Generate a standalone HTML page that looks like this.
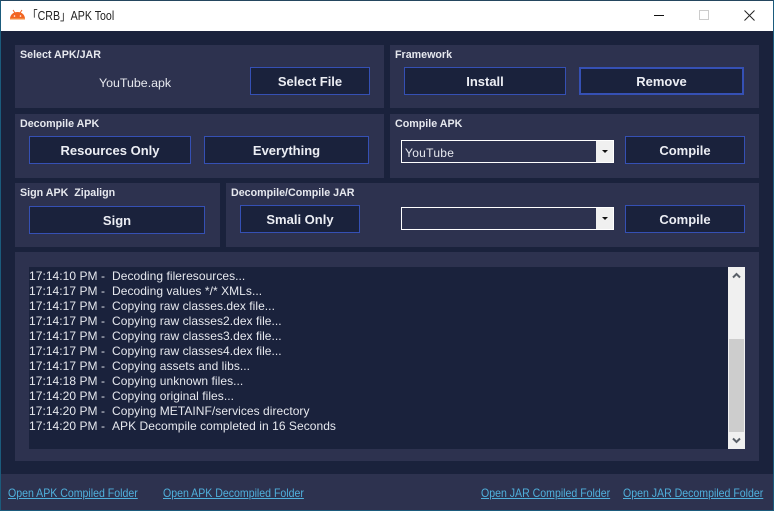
<!DOCTYPE html>
<html><head><meta charset="utf-8"><style>
html,body{margin:0;padding:0;width:774px;height:511px;overflow:hidden;background:#1a223c}
body{position:relative;font-family:"Liberation Sans","Noto Sans CJK JP",sans-serif}
div,a,span{position:absolute;box-sizing:border-box;white-space:nowrap}
.p{background:#2d324f}
.h{font-weight:bold;font-size:10.7px;color:#e6e8ee;line-height:12px}
.b{background:#1a223c;border:1px solid #3550b4;color:#eceef4;font-weight:bold;font-size:13px;display:flex;align-items:center;justify-content:center;padding-top:1px}
.c{border:1px solid #fff;background:#2d324f;color:#e6e8ee;font-size:12px;line-height:23px;padding-left:3px;padding-top:1px;letter-spacing:.3px}
.ar{right:0;top:0;bottom:0;width:17px;background:#f0f0f0}
.ar:after{content:"";position:absolute;left:6px;top:9px;border:3px solid transparent;border-top:3px solid #111;border-bottom:0}
.l{left:29px;font-size:12px;line-height:15px;color:#e6e8ee;letter-spacing:.05px}
.l span{position:absolute;left:83px}
a{font-size:12px;color:#4fb0dc;text-decoration:underline;line-height:15px;top:486px;transform:scaleX(.88);transform-origin:left top}
</style></head><body>
<div style="left:0;top:0;width:774px;height:511px;border:1px solid #1b5b7c;border-top-color:#24465f"></div>
<div style="left:1px;top:1px;width:772px;height:30px;background:#fff"></div>
<svg style="position:absolute;left:10px;top:9px" width="15" height="12" viewBox="0 0 15 12"><path d="M0 10C0 6 3 3 7.500 3S15 6 15 10Z" fill="#f26522"/><path d="M3 1l2 3M12 1l-2 3" stroke="#f26522" stroke-width="1"/><rect x="0" y="9" width="15" height="1.500" fill="#f58a3c"/><circle cx="4.500" cy="7" r=".8" fill="#fff"/><circle cx="10.500" cy="7" r=".8" fill="#fff"/></svg>
<div style="left:27px;top:8px;font-size:12.5px;line-height:16px;color:#222;transform:scaleX(.85);transform-origin:left top">「CRB」APK Tool</div>
<div style="left:654px;top:15px;width:10px;height:1px;background:#111"></div>
<div style="left:699px;top:10px;width:10px;height:10px;border:1px solid #ccc"></div>
<svg style="position:absolute;left:744px;top:10px" width="11" height="11" viewBox="0 0 11 11"><path d="M.5.500l10 10M10.500.500l-10 10" stroke="#222" stroke-width="1" fill="none"/></svg>

<div class="p" style="left:15px;top:45px;width:369px;height:63px"></div>
<div class="p" style="left:390px;top:45px;width:369px;height:63px"></div>
<div class="p" style="left:15px;top:114px;width:369px;height:64px"></div>
<div class="p" style="left:390px;top:114px;width:369px;height:64px"></div>
<div class="p" style="left:15px;top:183px;width:205px;height:64px"></div>
<div class="p" style="left:226px;top:183px;width:533px;height:64px"></div>
<div class="p" style="left:15px;top:252px;width:744px;height:209px"></div>
<div class="p" style="left:0;top:474px;width:774px;height:36px"></div>
<div style="left:0;top:474px;width:1px;height:37px;background:#1b5b7c"></div>
<div style="left:773px;top:474px;width:1px;height:37px;background:#1b5b7c"></div>
<div style="left:0;top:510px;width:774px;height:1px;background:#1b5b7c"></div>

<div class="h" style="left:20px;top:49px">Select APK/JAR</div>
<div class="h" style="left:395px;top:49px">Framework</div>
<div class="h" style="left:20px;top:118px">Decompile APK</div>
<div class="h" style="left:395px;top:118px">Compile APK</div>
<div class="h" style="left:20px;top:187px">Sign APK&nbsp; Zipalign</div>
<div class="h" style="left:231px;top:187px">Decompile/Compile JAR</div>

<div style="left:99px;top:75px;font-size:12.4px;line-height:16px;color:#e6e8ee">YouTube.apk</div>
<div class="b" style="left:250px;top:67px;width:120px;height:28px">Select File</div>
<div class="b" style="left:404px;top:67px;width:162px;height:28px">Install</div>
<div class="b" style="left:579px;top:67px;width:165px;height:28px;border-width:2px">Remove</div>
<div class="b" style="left:29px;top:136px;width:162px;height:28px">Resources Only</div>
<div class="b" style="left:204px;top:136px;width:165px;height:28px">Everything</div>
<div class="c" style="left:401px;top:140px;width:213px;height:23px">YouTube<div class="ar"></div></div>
<div class="b" style="left:625px;top:136px;width:120px;height:28px">Compile</div>
<div class="b" style="left:29px;top:206px;width:176px;height:28px">Sign</div>
<div class="b" style="left:240px;top:205px;width:120px;height:28px">Smali Only</div>
<div class="c" style="left:401px;top:207px;width:213px;height:23px"><div class="ar"></div></div>
<div class="b" style="left:625px;top:205px;width:120px;height:28px">Compile</div>

<div style="left:29px;top:267px;width:716px;height:182px;background:#1a223c"></div>
<div class="l" style="top:269px">17:14:10 PM -<span>Decoding fileresources...</span></div>
<div class="l" style="top:284px">17:14:17 PM -<span>Decoding values */* XMLs...</span></div>
<div class="l" style="top:299px">17:14:17 PM -<span>Copying raw classes.dex file...</span></div>
<div class="l" style="top:314px">17:14:17 PM -<span>Copying raw classes2.dex file...</span></div>
<div class="l" style="top:329px">17:14:17 PM -<span>Copying raw classes3.dex file...</span></div>
<div class="l" style="top:344px">17:14:17 PM -<span>Copying raw classes4.dex file...</span></div>
<div class="l" style="top:359px">17:14:17 PM -<span>Copying assets and libs...</span></div>
<div class="l" style="top:374px">17:14:18 PM -<span>Copying unknown files...</span></div>
<div class="l" style="top:389px">17:14:20 PM -<span>Copying original files...</span></div>
<div class="l" style="top:404px">17:14:20 PM -<span>Copying METAINF/services directory</span></div>
<div class="l" style="top:419px">17:14:20 PM -<span>APK Decompile completed in 16 Seconds</span></div>

<div style="left:728px;top:267px;width:17px;height:182px;background:#f0f0f0"></div>
<div style="left:729px;top:339px;width:15px;height:93px;background:#cdcdcd"></div>
<svg style="position:absolute;left:732px;top:272px" width="9" height="7" viewBox="0 0 9 7"><path d="M1 5.500l3.500-3.500 3.500 3.500" stroke="#5a6068" stroke-width="2" fill="none"/></svg>
<svg style="position:absolute;left:732px;top:437px" width="9" height="7" viewBox="0 0 9 7"><path d="M1 1.500l3.500 3.500 3.500-3.500" stroke="#5a6068" stroke-width="2" fill="none"/></svg>

<a href="#" style="left:8px">Open APK Compiled Folder</a>
<a href="#" style="left:163px">Open APK Decompiled Folder</a>
<a href="#" style="left:481px">Open JAR Compiled Folder</a>
<a href="#" style="left:623px">Open JAR Decompiled Folder</a>
</body></html>
